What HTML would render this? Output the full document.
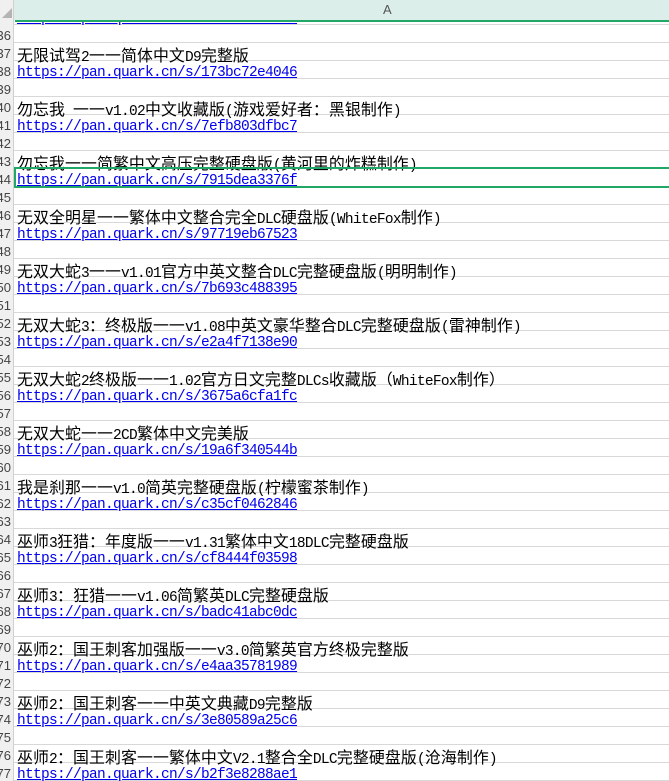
<!DOCTYPE html>
<html><head><meta charset="utf-8"><style>
html,body{margin:0;padding:0;width:669px;height:781px;overflow:hidden;background:#fff;position:relative}
.hdr{position:absolute;left:0;top:0;width:669px;height:20px;background:#dbeee9;z-index:5}
.corner{position:absolute;left:0;top:0;width:14px;height:20px;background:#f0f0f0;border-right:1px solid #d0d0d0;box-sizing:border-box}
.tri{position:absolute;left:2px;top:8px;width:0;height:0;border-left:10px solid transparent;border-bottom:10px solid #b4b4b4}
.A{position:absolute;left:383px;top:2px;font:13px "Liberation Sans",sans-serif;color:#555}
.gl{position:absolute;left:15px;top:20px;width:654px;height:2px;background:#21a866;z-index:6}
.row{position:absolute;left:0;width:669px;height:18px;border-bottom:1px solid #d8d8d8;box-sizing:border-box}
.num{position:absolute;left:0;top:0;width:14px;height:18px;overflow:hidden;background:#f0f0f0;border-right:1px solid #d0d0d0;box-sizing:border-box}
.num i{position:absolute;right:2px;top:3px;font:normal 13px "Liberation Sans",sans-serif;color:#444}
.cell{position:absolute;left:17px;top:4px;white-space:nowrap;font:14.5px "Liberation Mono",monospace;letter-spacing:-0.7px;color:#000;line-height:16px}
.c{font:15.9px "Noto Sans CJK SC",sans-serif;line-height:16px;letter-spacing:0.1px}
.L{color:#0000ee;text-decoration:underline}
.sel{position:absolute;left:14px;top:167px;width:655px;height:21px;border:2px solid #21a866;border-right:none;box-sizing:border-box;z-index:3}
.rh{position:absolute;left:0;top:20px;width:14px;height:5px;background:#f0f0f0;border-right:1px solid #d0d0d0;box-sizing:border-box;z-index:4}
</style></head><body>
<div class="row" style="top:7px"><div class="num"><i>35</i></div><div class="cell L">https://pan.quark.cn/s/5bf1a04d3e62</div></div>
<div class="row" style="top:25px"><div class="num"><i>36</i></div></div>
<div class="row" style="top:43px"><div class="num"><i>37</i></div><div class="cell"><span class="c">无限试驾</span>2<span class="c">一一简体中文</span>D9<span class="c">完整版</span></div></div>
<div class="row" style="top:61px"><div class="num"><i>38</i></div><div class="cell L">https://pan.quark.cn/s/173bc72e4046</div></div>
<div class="row" style="top:79px"><div class="num"><i>39</i></div></div>
<div class="row" style="top:97px"><div class="num"><i>40</i></div><div class="cell"><span class="c">勿忘我</span> <span class="c">一一</span>v1.02<span class="c">中文收藏版</span>(<span class="c">游戏爱好者：黑银制作</span>)</div></div>
<div class="row" style="top:115px"><div class="num"><i>41</i></div><div class="cell L">https://pan.quark.cn/s/7efb803dfbc7</div></div>
<div class="row" style="top:133px"><div class="num"><i>42</i></div></div>
<div class="row" style="top:151px"><div class="num"><i>43</i></div><div class="cell"><span class="c">勿忘我一一简繁中文高压完整硬盘版</span>(<span class="c">黄河里的炸糕制作</span>)</div></div>
<div class="row" style="top:169px"><div class="num"><i>44</i></div><div class="cell L">https://pan.quark.cn/s/7915dea3376f</div></div>
<div class="row" style="top:187px"><div class="num"><i>45</i></div></div>
<div class="row" style="top:205px"><div class="num"><i>46</i></div><div class="cell"><span class="c">无双全明星一一繁体中文整合完全</span>DLC<span class="c">硬盘版</span>(WhiteFox<span class="c">制作</span>)</div></div>
<div class="row" style="top:223px"><div class="num"><i>47</i></div><div class="cell L">https://pan.quark.cn/s/97719eb67523</div></div>
<div class="row" style="top:241px"><div class="num"><i>48</i></div></div>
<div class="row" style="top:259px"><div class="num"><i>49</i></div><div class="cell"><span class="c">无双大蛇</span>3<span class="c">一一</span>v1.01<span class="c">官方中英文整合</span>DLC<span class="c">完整硬盘版</span>(<span class="c">明明制作</span>)</div></div>
<div class="row" style="top:277px"><div class="num"><i>50</i></div><div class="cell L">https://pan.quark.cn/s/7b693c488395</div></div>
<div class="row" style="top:295px"><div class="num"><i>51</i></div></div>
<div class="row" style="top:313px"><div class="num"><i>52</i></div><div class="cell"><span class="c">无双大蛇</span>3<span class="c">：终极版一一</span>v1.08<span class="c">中英文豪华整合</span>DLC<span class="c">完整硬盘版</span>(<span class="c">雷神制作</span>)</div></div>
<div class="row" style="top:331px"><div class="num"><i>53</i></div><div class="cell L">https://pan.quark.cn/s/e2a4f7138e90</div></div>
<div class="row" style="top:349px"><div class="num"><i>54</i></div></div>
<div class="row" style="top:367px"><div class="num"><i>55</i></div><div class="cell"><span class="c">无双大蛇</span>2<span class="c">终极版一一</span>1.02<span class="c">官方日文完整</span>DLCs<span class="c">收藏版（</span>WhiteFox<span class="c">制作）</span></div></div>
<div class="row" style="top:385px"><div class="num"><i>56</i></div><div class="cell L">https://pan.quark.cn/s/3675a6cfa1fc</div></div>
<div class="row" style="top:403px"><div class="num"><i>57</i></div></div>
<div class="row" style="top:421px"><div class="num"><i>58</i></div><div class="cell"><span class="c">无双大蛇一一</span>2CD<span class="c">繁体中文完美版</span></div></div>
<div class="row" style="top:439px"><div class="num"><i>59</i></div><div class="cell L">https://pan.quark.cn/s/19a6f340544b</div></div>
<div class="row" style="top:457px"><div class="num"><i>60</i></div></div>
<div class="row" style="top:475px"><div class="num"><i>61</i></div><div class="cell"><span class="c">我是刹那一一</span>v1.0<span class="c">简英完整硬盘版</span>(<span class="c">柠檬蜜茶制作</span>)</div></div>
<div class="row" style="top:493px"><div class="num"><i>62</i></div><div class="cell L">https://pan.quark.cn/s/c35cf0462846</div></div>
<div class="row" style="top:511px"><div class="num"><i>63</i></div></div>
<div class="row" style="top:529px"><div class="num"><i>64</i></div><div class="cell"><span class="c">巫师</span>3<span class="c">狂猎：年度版一一</span>v1.31<span class="c">繁体中文</span>18DLC<span class="c">完整硬盘版</span></div></div>
<div class="row" style="top:547px"><div class="num"><i>65</i></div><div class="cell L">https://pan.quark.cn/s/cf8444f03598</div></div>
<div class="row" style="top:565px"><div class="num"><i>66</i></div></div>
<div class="row" style="top:583px"><div class="num"><i>67</i></div><div class="cell"><span class="c">巫师</span>3<span class="c">：狂猎一一</span>v1.06<span class="c">简繁英</span>DLC<span class="c">完整硬盘版</span></div></div>
<div class="row" style="top:601px"><div class="num"><i>68</i></div><div class="cell L">https://pan.quark.cn/s/badc41abc0dc</div></div>
<div class="row" style="top:619px"><div class="num"><i>69</i></div></div>
<div class="row" style="top:637px"><div class="num"><i>70</i></div><div class="cell"><span class="c">巫师</span>2<span class="c">：国王刺客加强版一一</span>v3.0<span class="c">简繁英官方终极完整版</span></div></div>
<div class="row" style="top:655px"><div class="num"><i>71</i></div><div class="cell L">https://pan.quark.cn/s/e4aa35781989</div></div>
<div class="row" style="top:673px"><div class="num"><i>72</i></div></div>
<div class="row" style="top:691px"><div class="num"><i>73</i></div><div class="cell"><span class="c">巫师</span>2<span class="c">：国王刺客一一中英文典藏</span>D9<span class="c">完整版</span></div></div>
<div class="row" style="top:709px"><div class="num"><i>74</i></div><div class="cell L">https://pan.quark.cn/s/3e80589a25c6</div></div>
<div class="row" style="top:727px"><div class="num"><i>75</i></div></div>
<div class="row" style="top:745px"><div class="num"><i>76</i></div><div class="cell"><span class="c">巫师</span>2<span class="c">：国王刺客一一繁体中文</span>V2.1<span class="c">整合全</span>DLC<span class="c">完整硬盘版</span>(<span class="c">沧海制作</span>)</div></div>
<div class="row" style="top:763px"><div class="num"><i>77</i></div><div class="cell L">https://pan.quark.cn/s/b2f3e8288ae1</div></div>
<div class="sel"></div>
<div class="rh"></div>
<div class="hdr"><div class="corner"><div class="tri"></div></div><div class="A">A</div></div>
<div class="gl"></div>
</body></html>
